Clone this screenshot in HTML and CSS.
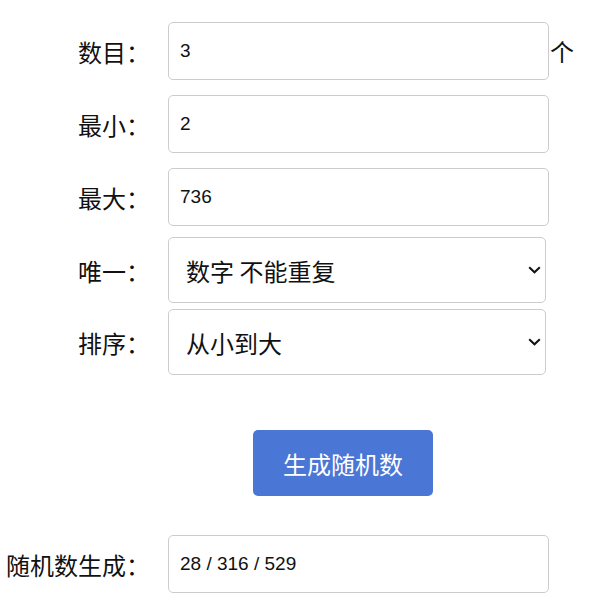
FILE: index.html
```html
<!DOCTYPE html>
<html lang="zh-CN">
  <head>
    <meta charset="UTF-8" />
    <meta name="viewport" content="width=device-width, initial-scale=1.0" />
    <title>随机数生成器</title>
    <link rel="stylesheet" href="styles.css">
  </head>
  <body>
    <form class="panel" onsubmit="return false;">
      <div class="row row-count">
        <label class="label" for="count">数目：</label>
        <input class="field" type="text" id="count" value="3" />
        <span class="unit">个</span>
      </div>
      <div class="row">
        <label class="label" for="min">最小：</label>
        <input class="field" type="text" id="min" value="2" />
      </div>
      <div class="row">
        <label class="label" for="max">最大：</label>
        <input class="field" type="text" id="max" value="736" />
      </div>
      <div class="row row-select">
        <label class="label" for="unique">唯一：</label>
        <div class="select-wrap">
          <select class="choice" id="unique">
            <option>数字 不能重复</option>
            <option>数字 可以重复</option>
          </select>
          <svg class="chevron" width="13" height="8" viewBox="0 0 13 8">
            <path d="M1.2 1.3 L6.5 6.3 L11.8 1.3" fill="none" stroke="#111" stroke-width="2" />
          </svg>
        </div>
      </div>
      <div class="row row-sort">
        <label class="label" for="sort">排序：</label>
        <div class="select-wrap">
          <select class="choice" id="sort">
            <option>从小到大</option>
            <option>从大到小</option>
            <option>不排序</option>
          </select>
          <svg class="chevron" width="13" height="8" viewBox="0 0 13 8">
            <path d="M1.2 1.3 L6.5 6.3 L11.8 1.3" fill="none" stroke="#111" stroke-width="2" />
          </svg>
        </div>
      </div>
      <div class="actions">
        <button type="button" class="btn" id="go">生成随机数</button>
      </div>
      <div class="row row-result">
        <label class="label" for="result">随机数生成：</label>
        <input class="field" type="text" id="result" value="28 / 316 / 529" readonly />
      </div>
    </form>
    <script>
      // 生成随机数
      document.getElementById("go").addEventListener("click", function () {
        const count = parseInt(document.getElementById("count").value, 10);
        const min = parseInt(document.getElementById("min").value, 10);
        const max = parseInt(document.getElementById("max").value, 10);
        const unique = document.getElementById("unique").selectedIndex === 0;
        const sort = document.getElementById("sort").selectedIndex;

        if (isNaN(count) || isNaN(min) || isNaN(max) || min > max) return;

        let nums = [];
        let guard = 0;
        while (nums.length < count && guard < 100000) {
          guard++;
          const n = Math.floor(Math.random() * (max - min + 1)) + min;
          if (unique && nums.indexOf(n) !== -1) continue;
          nums.push(n);
        }

        if (sort === 0) nums.sort((a, b) => a - b);
        if (sort === 1) nums.sort((a, b) => b - a);

        document.getElementById("result").value = nums.join(" / ");
      });
    </script>
  </body>
</html>
```

FILE: styles.css
```css
body {
  margin: 0;
  background-color: #fff;
  color: #111;
  font-family: "Noto Sans CJK SC", "Liberation Sans", sans-serif;
}
.panel {
  padding-top: 22px;
}
.row {
  display: flex;
  align-items: center;
  margin-bottom: 15px;
}
.row-select {
  margin-top: -4px;
  margin-bottom: 6px;
}
.row-sort {
  margin-bottom: 0;
}
.label {
  width: 150px;
  margin-right: 18px;
  text-align: right;
  font-size: 24px;
  white-space: nowrap;
}
.field {
  box-sizing: border-box;
  width: 381px;
  height: 58px;
  padding: 0 11px;
  border: 1px solid #ccc;
  border-radius: 5px;
  font-family: "Liberation Sans", Arial, sans-serif;
  font-size: 19px;
  color: #111;
  background: #fff;
  outline: none;
}
.unit {
  font-size: 24px;
  margin-left: 1px;
  margin-bottom: 2px;
}
.select-wrap {
  position: relative;
  width: 378px;
  height: 66px;
}
.choice {
  -webkit-appearance: none;
  appearance: none;
  box-sizing: border-box;
  width: 100%;
  height: 100%;
  padding: 0 40px 0 17px;
  border: 1px solid #ccc;
  border-radius: 5px;
  background: #fff;
  font-family: "Noto Sans CJK SC", sans-serif;
  font-size: 24px;
  color: #111;
  outline: none;
}
.chevron {
  position: absolute;
  right: 5px;
  top: 29px;
  pointer-events: none;
}
.actions {
  padding-left: 253px;
  margin-top: 55px;
  margin-bottom: 39px;
}
.btn {
  width: 180px;
  height: 66px;
  border: none;
  border-radius: 5px;
  background-color: #4a76d6;
  color: #fff;
  font-family: "Noto Sans CJK SC", sans-serif;
  font-size: 24px;
  cursor: pointer;
}
.row-result {
  margin-bottom: 0;
}
```
